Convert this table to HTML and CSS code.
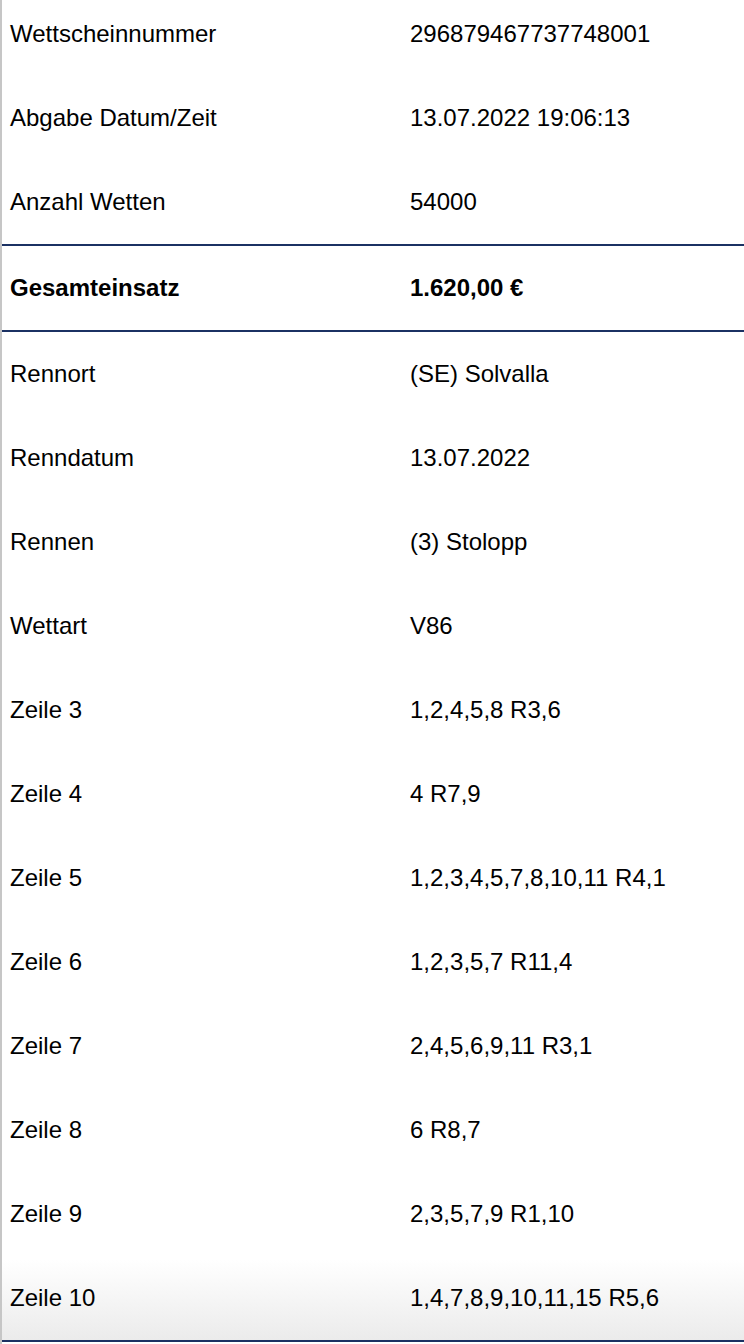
FILE: index.html
```html
<!DOCTYPE html>
<html lang="de">
<head>
    <meta charset="UTF-8">
    <meta name="viewport" content="width=device-width, initial-scale=1.0">
    <title>Wettschein</title>
    <link rel="stylesheet" href="styles.css">
</head>
<body>
    <!-- Details des Wettscheins -->
    <div class="ticket">
        <div class="row"><div class="label">Wettscheinnummer</div><div class="value">296879467737748001</div></div>
        <div class="row"><div class="label">Abgabe Datum/Zeit</div><div class="value">13.07.2022 19:06:13</div></div>
        <div class="row"><div class="label">Anzahl Wetten</div><div class="value">54000</div></div>
        <div class="row total"><div class="label">Gesamteinsatz</div><div class="value">1.620,00 €</div></div>
        <div class="row"><div class="label">Rennort</div><div class="value">(SE) Solvalla</div></div>
        <div class="row"><div class="label">Renndatum</div><div class="value">13.07.2022</div></div>
        <div class="row"><div class="label">Rennen</div><div class="value">(3) Stolopp</div></div>
        <div class="row"><div class="label">Wettart</div><div class="value">V86</div></div>
        <div class="row"><div class="label">Zeile 3</div><div class="value">1,2,4,5,8 R3,6</div></div>
        <div class="row"><div class="label">Zeile 4</div><div class="value">4 R7,9</div></div>
        <div class="row"><div class="label">Zeile 5</div><div class="value">1,2,3,4,5,7,8,10,11 R4,1</div></div>
        <div class="row"><div class="label">Zeile 6</div><div class="value">1,2,3,5,7 R11,4</div></div>
        <div class="row"><div class="label">Zeile 7</div><div class="value">2,4,5,6,9,11 R3,1</div></div>
        <div class="row"><div class="label">Zeile 8</div><div class="value">6 R8,7</div></div>
        <div class="row"><div class="label">Zeile 9</div><div class="value">2,3,5,7,9 R1,10</div></div>
        <div class="row last"><div class="label">Zeile 10</div><div class="value">1,4,7,8,9,10,11,15 R5,6</div></div>
    </div>
</body>
</html>
```

FILE: styles.css
```css
body {
    margin: 0;
    padding: 0;
    font-family: "Liberation Sans", Arial, sans-serif;
    color: #000;
    background: #fff;
    height: 1344px;
    overflow: hidden;
    border-left: 2px solid #c6c6c6;
    box-sizing: border-box;
}

.ticket {
    margin-top: -8px;
}

.row {
    display: grid;
    grid-template-columns: 400px 1fr;
    align-items: center;
    height: 84px;
    font-size: 24px;
}

.label,
.value {
    padding-left: 8px;
}

.total {
    font-weight: bold;
    border-top: 2px solid #1b3163;
    border-bottom: 2px solid #1b3163;
}

.last {
    background: linear-gradient(180deg, #fff 5%, #ebebeb 100%);
    border-bottom: 2px solid #1b3163;
}
```
